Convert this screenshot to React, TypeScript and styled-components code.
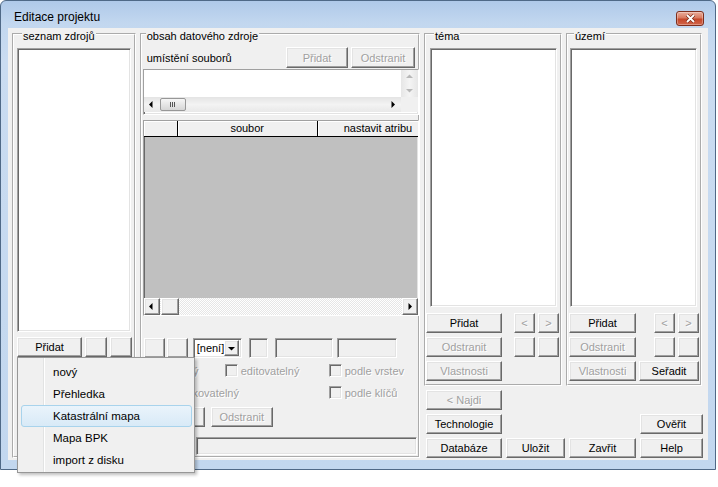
import React, { FC } from "react";
import styled, { createGlobalStyle, css } from "styled-components";

const GlobalStyle = createGlobalStyle`
  html, body {
    margin: 0;
    padding: 0;
    background: #fff;
  }
  body {
    font-family: "Liberation Sans", Arial, sans-serif;
    font-size: 11px;
    color: #000;
  }
  * {
    box-sizing: border-box;
  }
`;

// classic 3D edges
const raised = css`
  border: 1px solid;
  border-color: #fff #696969 #696969 #fff;
  box-shadow: inset -1px -1px 0 #a0a0a0, inset 1px 1px 0 #e3e3e3;
`;

const sunken = css`
  border: 1px solid;
  border-color: #a0a0a0 #fff #fff #a0a0a0;
  box-shadow: inset 1px 1px 0 #696969, inset -1px -1px 0 #e3e3e3;
`;

type Dir = "up" | "down" | "left" | "right";

const arrowPts: Record<Dir, string> = {
  up: "0,5 7,5 3.5,1.5",
  down: "0,2 7,2 3.5,5.5",
  left: "4.5,0 4.5,7 1,3.5",
  right: "2.5,0 2.5,7 6,3.5",
};

const Arrow: FC<{ dir: Dir; color?: string }> = ({ dir, color = "#000" }) => (
  <svg width="7" height="7" viewBox="0 0 7 7">
    <polygon points={arrowPts[dir]} fill={color} />
  </svg>
);

const Grip = () => (
  <svg width="7" height="7" viewBox="0 0 7 7">
    <path d="M1.5 1v5M3.5 1v5M5.5 1v5" stroke="#555" strokeWidth="1" />
  </svg>
);

const CloseGlyph = () => (
  <svg width="11" height="9" viewBox="0 0 11 9">
    <path d="M2 1l7 7M9 1L2 8" stroke="#7a2a18" strokeWidth="3.2" />
    <path d="M2 1l7 7M9 1L2 8" stroke="#fff" strokeWidth="1.8" />
  </svg>
);

const Page = styled.div`
  position: relative;
  width: 718px;
  height: 487px;
  overflow: hidden;
`;

const Window = styled.div`
  width: 716px;
  height: 470px;
  display: flex;
  flex-direction: column;
  border: 1px solid #4f6987;
  border-radius: 6px 6px 0 0;
  background: linear-gradient(
    to bottom,
    #afc9e9 0,
    #c2d7ef 22px,
    #cadcf1 60px,
    #c2d7ef 100%
  );
`;

const TitleBar = styled.div`
  height: 27px;
  display: flex;
  justify-content: space-between;
  padding: 0 11px 0 13px;
`;

const Title = styled.div`
  padding-top: 9px;
  font-size: 12px;
  line-height: 14px;
`;

const CloseButton = styled.div`
  width: 28px;
  height: 15px;
  margin-top: 10px;
  display: flex;
  align-items: center;
  justify-content: center;
  border: 1px solid #7e2e1d;
  border-radius: 3px;
  background: linear-gradient(
    to bottom,
    #e9ad9c 0,
    #d97a60 45%,
    #c4472a 55%,
    #d2664a 100%
  );
  box-shadow: inset 0 0 0 1px rgba(255, 255, 255, 0.3);
`;

const Client = styled.div`
  height: 432px;
  margin: 0 7px;
  padding: 0 5px 0 4px;
  display: flex;
  gap: 4px;
  background: #f0f0f0;
`;

const Group = styled.fieldset<{ $w: number; $h?: number }>`
  width: ${(p) => p.$w}px;
  height: ${(p) => (p.$h ? `${p.$h}px` : "auto")};
  min-width: 0;
  margin: -3px 0 0;
  padding: 0 0 3px;
  border: 2px groove #fff;
  display: flex;
  flex-direction: column;
  & > * {
    flex: none;
  }
`;

const Legend = styled.legend<{ $ml: number }>`
  margin-left: ${(p) => p.$ml}px;
  padding: 5px 1px 0;
  font-size: 11px;
  font-weight: normal;
  line-height: 13px;
`;

const ListBox = styled.div<{ $w: number; $h: number; $ml: number }>`
  ${sunken};
  width: ${(p) => p.$w}px;
  height: ${(p) => p.$h}px;
  margin: 5px 0 0 ${(p) => p.$ml}px;
  background: #fff;
`;

const Btn = styled.button<{ $w?: number; $h?: number; $ml?: number; $off?: boolean }>`
  ${raised};
  width: ${(p) => (p.$w ? `${p.$w}px` : "100%")};
  height: ${(p) => p.$h ?? 20}px;
  margin: 0 0 0 ${(p) => p.$ml ?? 0}px;
  padding: 0;
  flex: none;
  background: #f0f0f0;
  font-family: "Liberation Sans", Arial, sans-serif;
  font-size: 11px;
  color: ${(p) => (p.$off ? "#a0a0a0" : "#000")};
  text-shadow: ${(p) => (p.$off ? "1px 1px 0 #fff" : "none")};
`;

const Field = styled.div<{ $w: number; $h?: number; $ml?: number }>`
  ${sunken};
  width: ${(p) => p.$w}px;
  height: ${(p) => p.$h ?? 20}px;
  margin-left: ${(p) => p.$ml ?? 0}px;
  flex: none;
  background: #f0f0f0;
`;

/* left group */
const SourceButtons = styled.div`
  display: flex;
  gap: 3px;
  margin: 5px 0 0 3px;
`;

/* middle group */
const FileRow = styled.div`
  height: 21px;
  margin-top: 4px;
  padding: 0 3px 0 5px;
  display: flex;
  align-items: center;
  gap: 3px;
`;

const FileLabel = styled.span`
  flex: 1;
`;

const PathBox = styled.div`
  ${sunken};
  width: 276px;
  height: 46px;
  margin: 1px 0 0 1px;
  display: grid;
  grid-template-columns: 1fr 17px;
  grid-template-rows: 27px 15px;
  background: #fff;
`;

const PathText = styled.div`
  background: #fff;
`;

const ThemedVScroll = styled.div`
  display: flex;
  flex-direction: column;
  background: linear-gradient(to right, #e6e6e6, #f4f4f4 50%, #e6e6e6);
`;

const ThemedArrowCell = styled.div`
  flex: 1;
  display: flex;
  align-items: center;
  justify-content: center;
`;

const ThemedHScroll = styled.div`
  display: flex;
  align-items: stretch;
  background: linear-gradient(to bottom, #e4e4e4, #f3f3f3 50%, #e8e8e8);
`;

const ThemedArrow = styled.div`
  width: 16px;
  display: flex;
  align-items: center;
  justify-content: center;
`;

const ThemedThumb = styled.div`
  width: 26px;
  margin: 1px 0;
  display: flex;
  align-items: center;
  justify-content: center;
  border: 1px solid #979797;
  border-radius: 2px;
  background: linear-gradient(to bottom, #f6f6f6, #e6e6e6 50%, #d6d6d6);
`;

const ThemedTrack = styled.div`
  flex: 1;
`;

const ScrollCorner = styled.div`
  background: #f0f0f0;
`;

const DataGrid = styled.div`
  ${sunken};
  width: 276px;
  height: 196px;
  margin: 5px 0 0 1px;
  display: flex;
  flex-direction: column;
  background: #c0c0c0;
  overflow: hidden;
`;

const GridHeader = styled.div`
  height: 16px;
  display: flex;
  flex: none;
  overflow: hidden;
`;

const HeadCell = styled.div<{ $w?: number; $pad?: number }>`
  width: ${(p) => (p.$w ? `${p.$w}px` : "auto")};
  flex: ${(p) => (p.$w ? "none" : "1")};
  padding-left: ${(p) => p.$pad ?? 0}px;
  border-right: ${(p) => (p.$w ? "1px solid #000" : "none")};
  border-bottom: 1px solid #000;
  background: #f0f0f0;
  box-shadow: inset 1px 1px 0 #fff;
  text-align: ${(p) => (p.$pad ? "left" : "center")};
  line-height: 15px;
  white-space: nowrap;
`;

const GridBody = styled.div`
  flex: 1;
`;

const ClassicHScroll = styled.div`
  height: 17px;
  flex: none;
  display: flex;
  background-color: #fff;
  background-image: conic-gradient(
    #e6e6e6 25%,
    #fff 0 50%,
    #e6e6e6 0 75%,
    #fff 0
  );
  background-size: 2px 2px;
`;

const ClassicArrow = styled.div`
  ${raised};
  width: 16px;
  display: flex;
  align-items: center;
  justify-content: center;
  background: #f0f0f0;
`;

const ClassicThumb = styled.div`
  ${raised};
  width: 18px;
  margin-left: 1px;
  background: #f0f0f0;
`;

const ClassicTrack = styled.div`
  flex: 1;
`;

const ControlRow = styled.div`
  height: 20px;
  margin-top: 22px;
  display: flex;
`;

const Combo = styled.div`
  ${sunken};
  width: 49px;
  margin-left: 5px;
  padding: 2px 2px 2px 3px;
  display: flex;
  align-items: center;
  background: #fff;
`;

const ComboText = styled.span`
  flex: 1;
  line-height: 14px;
`;

const ComboButton = styled.div`
  ${raised};
  width: 15px;
  height: 16px;
  display: flex;
  align-items: center;
  justify-content: center;
  background: #f0f0f0;
`;

const CheckGrid = styled.div`
  margin-top: 6px;
  padding-left: 3px;
  display: grid;
  grid-template-columns: 80px 104px 1fr;
  grid-auto-rows: 13px;
  row-gap: 9px;
`;

const CheckItem = styled.label`
  display: flex;
  align-items: center;
  gap: 3px;
  color: #a0a0a0;
  text-shadow: 1px 1px 0 #fff;
  white-space: nowrap;
`;

const CheckBox = styled.span`
  ${sunken};
  width: 13px;
  height: 13px;
  flex: none;
  background: #f0f0f0;
`;

const LayerButtons = styled.div`
  margin: 8px 0 0 1px;
  display: flex;
  gap: 6px;
`;

const FilterRow = styled.div`
  height: 18px;
  margin-top: 10px;
  padding: 0 1px 0 3px;
  display: flex;
  align-items: center;
`;

const FilterLabel = styled.span`
  flex: 1;
`;

/* right side */
const RightArea = styled.div`
  display: flex;
  flex-direction: column;
`;

const GroupsRow = styled.div`
  display: flex;
  gap: 4px;
`;

const ListButtons = styled.div<{ $ml: number }>`
  margin: 6px 1px 0 ${(p) => p.$ml}px;
  display: flex;
  flex-direction: column;
  gap: 4px;
`;

const ListButtonRow = styled.div`
  height: 20px;
  display: flex;
  justify-content: space-between;
`;

const NavPair = styled.div`
  display: flex;
  gap: 3px;
`;

const Footer = styled.div`
  margin: 4px 0 0 2px;
  display: grid;
  grid-template-columns: 76px 59px 67px 63px;
  grid-template-rows: repeat(3, 20px);
  grid-template-areas:
    "find . . ."
    "tech . . check"
    "db save close help";
  gap: 4px;
`;

const FooterBtn = styled(Btn)<{ $area: string }>`
  grid-area: ${(p) => p.$area};
`;

/* popup menu */
const Menu = styled.ul`
  position: absolute;
  left: 17px;
  top: 357px;
  width: 178px;
  height: 116px;
  margin: 0;
  padding: 3px 2px 2px 3px;
  list-style: none;
  border: 1px solid #979797;
  background-color: #f0f0f0;
  background-image: linear-gradient(
    to right,
    transparent 25px,
    #e2e3e3 25px 26px,
    #fff 26px 27px,
    transparent 27px
  );
  box-shadow: 2px 2px 3px rgba(0, 0, 0, 0.25);
  font-size: 11.5px;
`;

const MenuItem = styled.li<{ $active?: boolean }>`
  height: 22px;
  padding-left: 31px;
  line-height: 20px;
  border: 1px solid ${(p) => (p.$active ? "#a8d3ec" : "transparent")};
  border-radius: 3px;
  background: ${(p) =>
    p.$active ? "linear-gradient(to bottom, #eaf4fb, #d8eaf7)" : "none"};
`;

const Check: FC<{ label?: string }> = ({ label }) =>
  label ? (
    <CheckItem>
      <CheckBox />
      {label}
    </CheckItem>
  ) : (
    <span />
  );

const menuItems = ["nový", "Přehledka", "Katastrální mapa", "Mapa BPK", "import z disku"];

const App: FC = () => (
  <>
    <GlobalStyle />
    <Page>
      <Window>
        <TitleBar>
          <Title>Editace projektu</Title>
          <CloseButton>
            <CloseGlyph />
          </CloseButton>
        </TitleBar>
        <Client>
          <Group $w={124} $h={433}>
            <Legend $ml={8}>seznam zdrojů</Legend>
            <ListBox $w={114} $h={284} $ml={3} />
            <SourceButtons>
              <Btn $w={65}>Přidat</Btn>
              <Btn $w={22} />
              <Btn $w={22} />
            </SourceButtons>
          </Group>

          <Group $w={281} $h={433}>
            <Legend $ml={4}>obsah datového zdroje</Legend>
            <FileRow>
              <FileLabel>umístění souborů</FileLabel>
              <Btn $w={62} $h={21} $off>
                Přidat
              </Btn>
              <Btn $w={64} $h={21} $off>
                Odstranit
              </Btn>
            </FileRow>
            <PathBox>
              <PathText />
              <ThemedVScroll>
                <ThemedArrowCell>
                  <Arrow dir="up" color="#b8b8b8" />
                </ThemedArrowCell>
                <ThemedArrowCell>
                  <Arrow dir="down" color="#b8b8b8" />
                </ThemedArrowCell>
              </ThemedVScroll>
              <ThemedHScroll>
                <ThemedArrow>
                  <Arrow dir="left" />
                </ThemedArrow>
                <ThemedThumb>
                  <Grip />
                </ThemedThumb>
                <ThemedTrack />
                <ThemedArrow>
                  <Arrow dir="right" />
                </ThemedArrow>
              </ThemedHScroll>
              <ScrollCorner />
            </PathBox>
            <DataGrid>
              <GridHeader>
                <HeadCell $w={34} />
                <HeadCell $w={140}>soubor</HeadCell>
                <HeadCell $pad={26}>nastavit atribu</HeadCell>
              </GridHeader>
              <GridBody />
              <ClassicHScroll>
                <ClassicArrow>
                  <Arrow dir="left" />
                </ClassicArrow>
                <ClassicThumb />
                <ClassicTrack />
                <ClassicArrow>
                  <Arrow dir="right" />
                </ClassicArrow>
              </ClassicHScroll>
            </DataGrid>
            <ControlRow>
              <Btn $w={21} $ml={2} />
              <Btn $w={21} $ml={2} />
              <Combo>
                <ComboText>[není]</ComboText>
                <ComboButton>
                  <Arrow dir="down" />
                </ComboButton>
              </Combo>
              <Field $w={19} $ml={7} />
              <Field $w={58} $ml={7} />
              <Field $w={60} $ml={4} />
            </ControlRow>
            <CheckGrid>
              <Check label="povinný" />
              <Check label="editovatelný" />
              <Check label="podle vrstev" />
              <Check label="identifikovatelný" />
              <Check />
              <Check label="podle klíčů" />
            </CheckGrid>
            <LayerButtons>
              <Btn $w={62}>Přidat</Btn>
              <Btn $w={62} $off>
                Odstranit
              </Btn>
            </LayerButtons>
            <FilterRow>
              <FilterLabel>filtr</FilterLabel>
              <Field $w={221} $h={18} />
            </FilterRow>
          </Group>

          <RightArea>
            <GroupsRow>
              <Group $w={138}>
                <Legend $ml={8}>téma</Legend>
                <ListBox $w={127} $h={259} $ml={4} />
                <ListButtons $ml={0}>
                  <ListButtonRow>
                    <Btn $w={76}>Přidat</Btn>
                    <NavPair>
                      <Btn $w={21} $off>
                        &lt;
                      </Btn>
                      <Btn $w={21} $off>
                        &gt;
                      </Btn>
                    </NavPair>
                  </ListButtonRow>
                  <ListButtonRow>
                    <Btn $w={76} $off>
                      Odstranit
                    </Btn>
                    <NavPair>
                      <Btn $w={21} />
                      <Btn $w={21} />
                    </NavPair>
                  </ListButtonRow>
                  <ListButtonRow>
                    <Btn $w={76} $off>
                      Vlastnosti
                    </Btn>
                  </ListButtonRow>
                </ListButtons>
              </Group>
              <Group $w={136}>
                <Legend $ml={6}>území</Legend>
                <ListBox $w={127} $h={259} $ml={2} />
                <ListButtons $ml={1}>
                  <ListButtonRow>
                    <Btn $w={67}>Přidat</Btn>
                    <NavPair>
                      <Btn $w={21} $off>
                        &lt;
                      </Btn>
                      <Btn $w={21} $off>
                        &gt;
                      </Btn>
                    </NavPair>
                  </ListButtonRow>
                  <ListButtonRow>
                    <Btn $w={67} $off>
                      Odstranit
                    </Btn>
                    <NavPair>
                      <Btn $w={21} />
                      <Btn $w={21} />
                    </NavPair>
                  </ListButtonRow>
                  <ListButtonRow>
                    <Btn $w={67} $off>
                      Vlastnosti
                    </Btn>
                    <Btn $w={60}>Seřadit</Btn>
                  </ListButtonRow>
                </ListButtons>
              </Group>
            </GroupsRow>
            <Footer>
              <FooterBtn $area="find" $off>
                &lt; Najdi
              </FooterBtn>
              <FooterBtn $area="tech">Technologie</FooterBtn>
              <FooterBtn $area="check">Ověřit</FooterBtn>
              <FooterBtn $area="db">Databáze</FooterBtn>
              <FooterBtn $area="save">Uložit</FooterBtn>
              <FooterBtn $area="close">Zavřit</FooterBtn>
              <FooterBtn $area="help">Help</FooterBtn>
            </Footer>
          </RightArea>
        </Client>
      </Window>
      <Menu>
        {menuItems.map((item, i) => (
          <MenuItem key={item} $active={i === 2}>
            {item}
          </MenuItem>
        ))}
      </Menu>
    </Page>
  </>
);

export default App;
